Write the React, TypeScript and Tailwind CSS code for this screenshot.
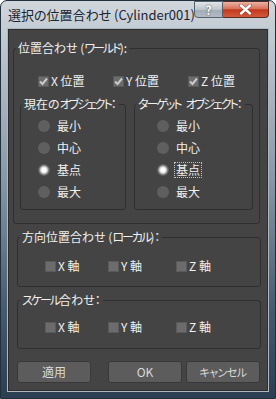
import React from "react";

const FONT = { fontFamily: '"Noto Sans CJK JP", "Noto Sans", sans-serif' };

function K({ children }: { children: React.ReactNode }) {
  return <span className="tracking-[-2px]">{children}</span>;
}

function CheckBox({ checked }: { checked: boolean }) {
  return (
    <span className="relative flex h-[11px] w-[11px] shrink-0 items-center justify-center border border-[#5a5a5a] bg-[#6c6c6c]">
      {checked && (
        <svg width="9" height="9" viewBox="0 0 9 9">
          <path d="M1 4.5 L3.5 7 L8 1.5" fill="none" stroke="#c9c9c9" strokeWidth="2" />
        </svg>
      )}
    </span>
  );
}

function Radio({ on }: { on?: boolean }) {
  return on ? (
    <span className="h-[12px] w-[12px] shrink-0 rounded-full bg-[radial-gradient(circle,#ffffff_0,#ffffff_2px,#c8c8c8_3.5px,#6a6a6a_5px,#5c5c5c_6px)]" />
  ) : (
    <span className="h-[12px] w-[12px] shrink-0 rounded-full bg-[#5f5f5f]" />
  );
}

function RadioRow({ label, on, focus }: { label: string; on?: boolean; focus?: boolean }) {
  return (
    <div className="flex h-[22px] items-center">
      <Radio on={on} />
      <span
        className={
          focus
            ? "ml-[5px] border border-dotted border-[#c0c0c0] px-[1px] leading-[14px]"
            : "ml-[7px] leading-[14px]"
        }
      >
        {label}
      </span>
    </div>
  );
}

function AxisItem({ axis, word, checked, w }: { axis: string; word: string; checked: boolean; w: string }) {
  return (
    <div className={"flex items-center " + w}>
      <CheckBox checked={checked} />
      <span className="ml-[2px] whitespace-nowrap leading-[14px]">
        {axis} {word}
      </span>
    </div>
  );
}

export default function App() {
  return (
    <div
      style={FONT}
      className="flex h-[399px] w-[276px] flex-col overflow-hidden rounded-t-[7px] border border-[#22303d] bg-[linear-gradient(to_bottom,#d0d7dd_0%,#bcc5cd_12%,#8797a6_45%,#465a6e_78%,#2c3e51_100%)] text-[12px] text-[#f0f0f0] [font-feature-settings:'palt']"
    >
      {/* title bar */}
      <div className="flex h-[28px] shrink-0 items-start justify-between">
        <div className="min-w-0 flex-1 whitespace-nowrap pl-[7px] pt-[6px] text-[13px] leading-[16px] text-[#1b2430]">
          選択の位置合わせ (Cylinder001)
        </div>
        <div className="mr-[6px] flex shrink-0">
          <div className="flex h-[17px] w-[29px] items-center justify-center rounded-bl-[4px] border border-[#55616d] bg-[linear-gradient(to_bottom,#e2e6ea_0%,#bcc4cb_50%,#a2acb5_51%,#b2bbc3_100%)] text-[12px] font-bold leading-none text-white [text-shadow:0_0_2px_#2a3540]">
            ?
          </div>
          <div className="flex h-[17px] w-[46px] items-center justify-center rounded-br-[4px] border border-l-0 border-[#5b2c22] bg-[linear-gradient(to_bottom,#eab3a4_0%,#d8725a_45%,#c4381d_52%,#d35a3c_100%)] text-white">
            <svg width="13" height="11" viewBox="0 0 13 11">
              <path d="M2 1.5 L11 9.5 M11 1.5 L2 9.5" stroke="#3a1a12" strokeWidth="3.6" strokeLinecap="round" opacity="0.5" />
              <path d="M2 1.5 L11 9.5 M11 1.5 L2 9.5" stroke="#ffffff" strokeWidth="2.4" strokeLinecap="round" />
            </svg>
          </div>
        </div>
      </div>

      {/* client area */}
      <div className="mx-[7px] flex h-[362px] shrink-0 flex-col border border-[#2e2e2e] bg-[#444444] shadow-[0_0_0_1px_#aeb8c1]">
        {/* group 1 */}
        <fieldset className="ml-[4px] mt-[10px] h-[184px] w-[247px] rounded-[3px] border border-[#2f2f2f]">
          <legend className="ml-[2px] whitespace-nowrap px-[2px] leading-[16px]">
            位置合わせ (<K>ワールド</K>):
          </legend>
          <div className="mt-[17px] flex h-[16px] items-center pl-[24px]">
            <AxisItem axis="X" word="位置" checked w="w-[75px]" />
            <AxisItem axis="Y" word="位置" checked w="w-[75px]" />
            <AxisItem axis="Z" word="位置" checked w="w-[70px]" />
          </div>
          <div className="mt-[7px] flex gap-[8px] pl-[6px]">
            <fieldset className="h-[114px] w-[106px] rounded-[3px] border border-[#2f2f2f]">
              <legend className="ml-[1px] whitespace-nowrap px-[2px] leading-[16px]">
                現在の<K>オブジェクト</K>：
              </legend>
              <div className="mt-[3px] flex flex-col pl-[17px]">
                <RadioRow label="最小" />
                <RadioRow label="中心" />
                <RadioRow label="基点" on />
                <RadioRow label="最大" />
              </div>
            </fieldset>
            <fieldset className="h-[114px] w-[119px] rounded-[3px] border border-[#2f2f2f]">
              <legend className="ml-[1px] whitespace-nowrap px-[2px] leading-[16px]">
                <K>ターゲット</K>
                <span className="ml-[5px]">
                  <K>オブジェクト</K>
                </span>
                ：
              </legend>
              <div className="mt-[3px] flex flex-col pl-[22px]">
                <RadioRow label="最小" />
                <RadioRow label="中心" />
                <RadioRow label="基点" on focus />
                <RadioRow label="最大" />
              </div>
            </fieldset>
          </div>
        </fieldset>

        {/* group 2 */}
        <fieldset className="ml-[8px] mt-[5px] h-[58px] w-[244px] rounded-[3px] border border-[#2f2f2f]">
          <legend className="ml-[2px] whitespace-nowrap px-[2px] leading-[16px]">
            方向位置合わせ (<K>ローカル</K>)：
          </legend>
          <div className="mt-[13px] flex h-[16px] items-center pl-[27px]">
            <AxisItem axis="X" word="軸" checked={false} w="w-[63px]" />
            <AxisItem axis="Y" word="軸" checked={false} w="w-[68px]" />
            <AxisItem axis="Z" word="軸" checked={false} w="w-[60px]" />
          </div>
        </fieldset>

        {/* group 3 */}
        <fieldset className="ml-[8px] mt-[5px] h-[57px] w-[244px] rounded-[3px] border border-[#2f2f2f]">
          <legend className="ml-[2px] whitespace-nowrap px-[2px] leading-[16px]">
            <K>スケール</K>合わせ：
          </legend>
          <div className="mt-[11px] flex h-[16px] items-center pl-[27px]">
            <AxisItem axis="X" word="軸" checked={false} w="w-[63px]" />
            <AxisItem axis="Y" word="軸" checked={false} w="w-[68px]" />
            <AxisItem axis="Z" word="軸" checked={false} w="w-[60px]" />
          </div>
        </fieldset>

        {/* buttons */}
        <div className="mt-[12px] flex">
          <button className="ml-[8px] flex h-[22px] w-[74px] items-center justify-center rounded-[3px] border border-[#393939] bg-[#5c5c5c] text-[12px] text-[#dadada]">
            適用
          </button>
          <button className="ml-[17px] flex h-[22px] w-[74px] items-center justify-center rounded-[3px] border border-[#393939] bg-[#5c5c5c] text-[12px] text-[#dadada]">
            OK
          </button>
          <button className="ml-[4px] flex h-[22px] w-[74px] items-center justify-center rounded-[3px] border border-[#393939] bg-[#5c5c5c] text-[11px] tracking-[-0.5px] text-[#dadada]">
            キャンセル
          </button>
        </div>
      </div>
    </div>
  );
}
